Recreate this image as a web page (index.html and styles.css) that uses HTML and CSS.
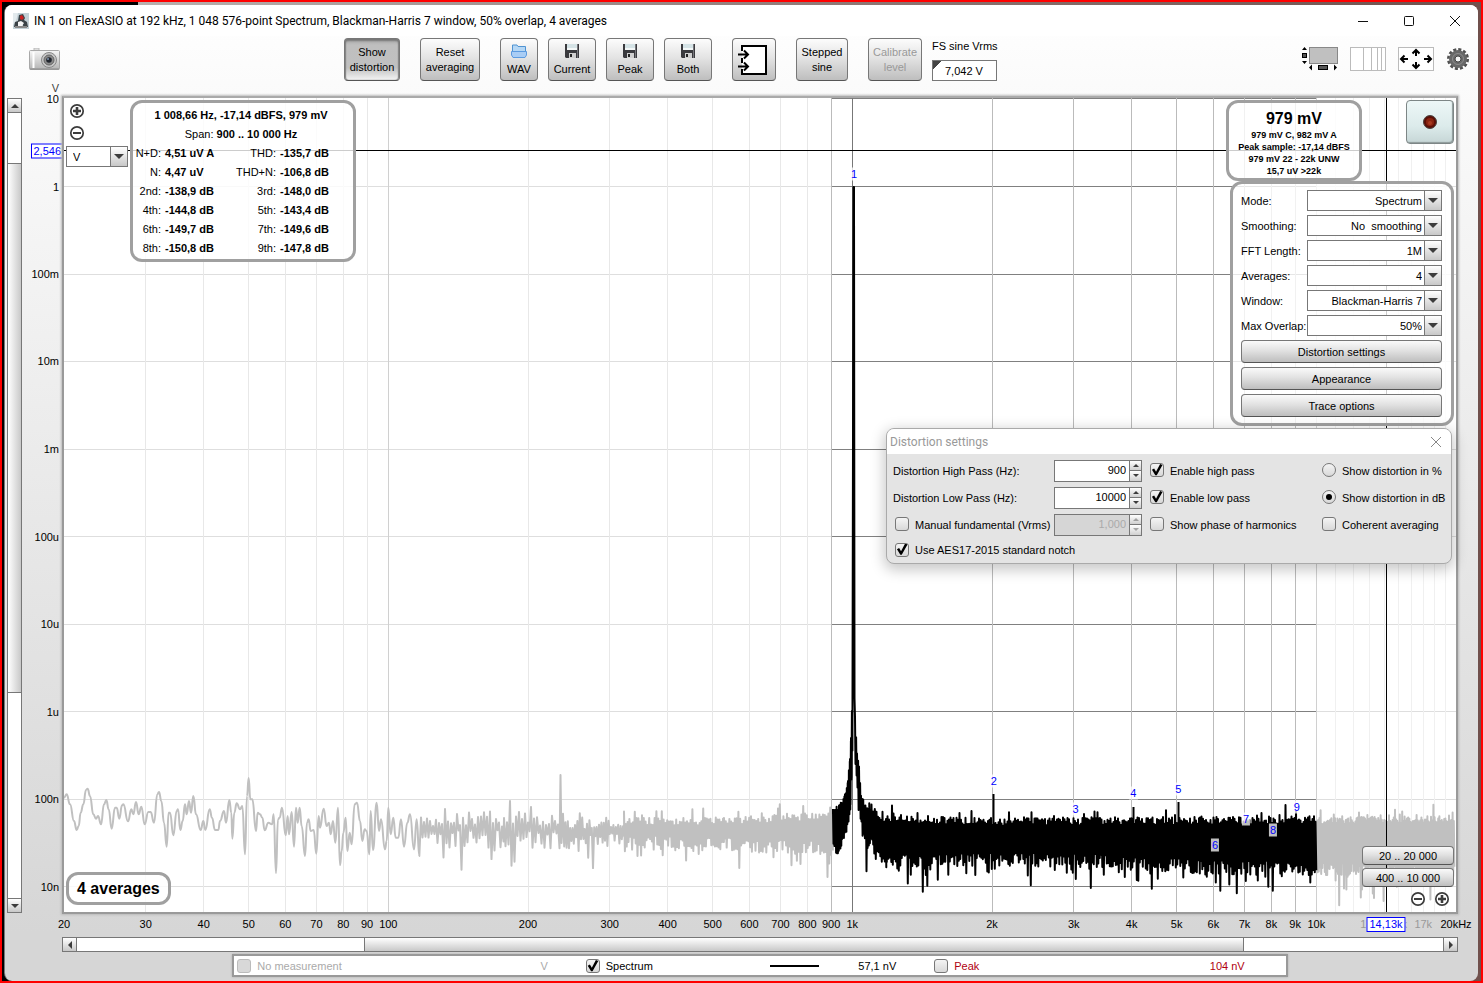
FILE: index.html
```html
<!DOCTYPE html>
<html lang="en">
<head>
    <meta charset="UTF-8">
    <meta name="viewport" content="width=device-width, initial-scale=1.0">
    <title>Spectrum analyser</title>
    <link rel="stylesheet" href="styles.css">
</head>
<body>
    <!-- Shared icons -->
    <svg class="icon-defs" width="0" height="0" aria-hidden="true">
        <linearGradient id="metal" x1="0" y1="0" x2="0" y2="1">
            <stop offset="0" stop-color="#f6f6f6"/>
            <stop offset="1" stop-color="#b4b4b4"/>
        </linearGradient>
        <symbol id="floppy" viewBox="0 0 14 14">
            <path d="M0 0H14V14H1L0 13Z" fill="#3a3a3e"/>
            <rect x="2" width="10" height="6" fill="#d5e3e6"/>
            <rect x="2" y="4" width="10" height="2" fill="#f4f8f8"/>
            <rect x="4" y="9" width="7" height="5" fill="#d0d0d0"/>
            <rect x="5" y="10" width="2" height="3" fill="#222"/>
            <path d="M12.500 0V14" stroke="#77777c"/>
        </symbol>
        <symbol id="plus" viewBox="0 0 16 16">
            <circle cx="8" cy="8" r="6.200" fill="#fff" stroke="#3c3c3c" stroke-width="1.700"/>
            <path d="M4 8H12M8 4V12" stroke="#3c3c3c" stroke-width="2.600"/>
        </symbol>
        <symbol id="minus" viewBox="0 0 16 16">
            <circle cx="8" cy="8" r="6.200" fill="#fff" stroke="#3c3c3c" stroke-width="1.700"/>
            <path d="M4 8H12" stroke="#3c3c3c" stroke-width="2.200"/>
        </symbol>
    </svg>

    <div class="desktop">
    <div class="window">
        <header class="titlebar">
            <svg width="16" height="16" viewBox="0 0 16 16">
                <rect width="16" height="16" fill="#c3d0d6"/>
                <path d="M0 0H5L3 8L0 12Z" fill="#e3eaed"/>
                <path d="M6 2L10 1L12 5L11 7L14 9L15 14H11L9 11L5 14H1L2 9L5 8Z" fill="#3b4246"/>
                <path d="M7 3L9 2L11 5L9 7L7 6Z" fill="#c22"/>
                <path d="M5 9L8 8L11 10L9 13H5Z" fill="#f5f5f5"/>
                <path d="M2 13H14V15H2Z" fill="#888"/>
            </svg>
            <h1>IN 1 on FlexASIO at 192 kHz, 1 048 576-point Spectrum, Blackman-Harris 7 window, 50% overlap, 4 averages</h1>
            <div class="window-controls">
                <button aria-label="Minimise"><svg width="12" height="12" viewBox="0 0 12 12"><path d="M1 6.500H11"/></svg></button>
                <button aria-label="Maximise"><svg width="12" height="12" viewBox="0 0 12 12"><rect x="1.500" y="1.500" width="9" height="9" rx="1"/></svg></button>
                <button aria-label="Close"><svg width="12" height="12" viewBox="0 0 12 12"><path d="M1 1L11 11M11 1L1 11"/></svg></button>
            </div>
        </header>

        <div class="toolbar">
            <button class="bare" aria-label="Capture image">
                <svg width="31" height="22" viewBox="0 0 31 22">
                    <rect x="5" y="0" width="5" height="3" fill="#ddd" stroke="#bbb"/>
                    <rect x=".5" y="2.500" width="30" height="19" rx="1" fill="url(#metal)" stroke="#a8a8a8"/>
                    <path d="M4.500 4V20" stroke="#fff" stroke-width="2"/>
                    <path d="M1 21H30" stroke="#888"/>
                    <circle cx="20" cy="12" r="7.500" fill="#c8c8c8" stroke="#888"/>
                    <circle cx="20" cy="12" r="5" fill="#8b8b8b" stroke="#666"/>
                    <circle cx="20" cy="12" r="2.800" fill="#22262e"/>
                    <circle cx="19" cy="11" r="1" fill="#7f93ad"/>
                </svg>
            </button>

            <div class="tools">
                <button class="tool pressed w56">Show<br>distortion</button>
                <button class="tool w60">Reset<br>averaging</button>
                <div class="save-group">
                    <button class="tool w38">
                        <svg width="16" height="14" viewBox="0 0 16 14">
                            <path d="M1.500 13V1H6L7 2.500H14.500V8" fill="#b5d7f5" stroke="#4f93d2"/>
                            <path d="M.5 7.500H15.500V11L14 13.500H2L.5 11Z" fill="#a9cdf5" stroke="#5c9be0"/>
                        </svg>
                        <span>WAV</span>
                    </button>
                    <button class="tool w48"><svg width="14" height="14"><use href="#floppy"/></svg><span>Current</span></button>
                    <button class="tool w48"><svg width="14" height="14"><use href="#floppy"/></svg><span>Peak</span></button>
                    <button class="tool w48"><svg width="14" height="14"><use href="#floppy"/></svg><span>Both</span></button>
                </div>
                <button class="tool w44" aria-label="Inputs">
                    <svg width="30" height="30" viewBox="0 0 30 30" fill="none" stroke="#000" stroke-width="2">
                        <path d="M4 1H28V29H4Z" fill="#fff" stroke="none"/>
                        <path d="M4 6V1H28V29H4V24M4 13V18"/>
                        <path d="M0 9.500H10M6 5.500L10 9.500L6 13.500M0 21.500H10M6 17.500L10 21.500L6 25.500"/>
                    </svg>
                </button>
                <button class="tool w52">Stepped<br>sine</button>
                <div class="save-group">
                    <button class="tool w54" disabled>Calibrate<br>level</button>
                    <div class="fs-field">
                        <label for="fs">FS sine Vrms</label>
                        <input id="fs" type="text" value="7,042 V">
                    </div>
                </div>
            </div>

            <div class="view-icons">
                <button class="bare" aria-label="Scrollbars">
                    <svg width="37" height="26" viewBox="0 0 37 26">
                        <rect x="8.500" y="1.500" width="28" height="16" fill="#c0c0c0" stroke="#888"/>
                        <path d="M1 4L3.500 1L6 4ZM1 15L3.500 18L6 15ZM11 18.500L8 21.500L11 24.500ZM33 18.500L36 21.500L33 24.500Z"/>
                        <rect x="1.500" y="7.500" width="4" height="4" fill="#555" stroke="#000"/>
                        <rect x="17.500" y="19.500" width="9" height="4" fill="#555" stroke="#000"/>
                    </svg>
                </button>
                <button class="bare" aria-label="Log grid">
                    <svg width="36" height="24" viewBox="0 0 36 24">
                        <rect x=".5" y=".5" width="35" height="23" fill="#fff" stroke="#bbb"/>
                        <path d="M13.500 1V23M21.500 1V23M27.500 1V23M31.500 1V23" stroke="#bbb"/>
                    </svg>
                </button>
                <button class="bare" aria-label="Limits">
                    <svg width="36" height="24" viewBox="0 0 36 24" fill="none" stroke="#000" stroke-width="2">
                        <rect x=".5" y=".5" width="35" height="23" fill="#fff" stroke="#bbb" stroke-width="1"/>
                        <path d="M18 9V3M14.500 6.500L18 3L21.500 6.500M18 15V21M14.500 17.500L18 21L21.500 17.500M10 12H3M6.500 8.500L3 12L6.500 15.500M26 12H33M29.500 8.500L33 12L29.500 15.500"/>
                    </svg>
                </button>
                <button class="bare" aria-label="Settings">
                    <svg width="24" height="24" viewBox="0 0 24 24">
                        <circle cx="12" cy="12" r="9.500" fill="none" stroke="#505050" stroke-width="3" stroke-dasharray="3 1.970"/>
                        <circle cx="12" cy="12" r="6" fill="none" stroke="#686868" stroke-width="6"/>
                        <circle cx="12" cy="12" r="5.500" fill="none" stroke="#8e8e8e"/>
                        <circle cx="12" cy="12" r="3" fill="#f4f4f4" stroke="#444"/>
                    </svg>
                </button>
            </div>
        </div>

        <main class="workspace">
            <div class="scroll vertical">
                <button aria-label="Scroll up"><i class="tri up"></i></button>
                <div class="track before"></div>
                <div class="thumb"></div>
                <div class="track after"></div>
                <button aria-label="Scroll down"><i class="tri down"></i></button>
            </div>

            <div class="y-axis" id="yAxis">
                <span class="unit">V</span>
            </div>

            <section class="plot" id="plot">
                <svg class="graph" viewBox="0 0 1392 814" preserveAspectRatio="none">
                    <g id="grid"></g>
                    <path id="noiseLow" class="trace muted"/>
                    <path id="noiseHigh" class="trace muted"/>
                    <path id="signal" class="trace"/>
                    <g id="cursor"></g>
                </svg>

                <div class="plot-left">
                    <button class="bare" aria-label="Zoom in vertically"><svg width="16" height="16"><use href="#plus"/></svg></button>
                    <button class="bare" aria-label="Zoom out vertically"><svg width="16" height="16"><use href="#minus"/></svg></button>
                    <span class="combo unit-combo"><select aria-label="Unit"><option>V</option></select></span>
                </div>

                <div class="panel readout">
                    <strong>1 008,66 Hz, -17,14 dBFS, 979 mV</strong>
                    <p>Span: <strong>900 .. 10 000 Hz</strong></p>
                    <dl>
                        <dt>N+D:</dt><dd>4,51 uV A</dd><dt>THD:</dt><dd>-135,7 dB</dd>
                        <dt>N:</dt><dd>4,47 uV</dd><dt>THD+N:</dt><dd>-106,8 dB</dd>
                        <dt>2nd:</dt><dd>-138,9 dB</dd><dt>3rd:</dt><dd>-148,0 dB</dd>
                        <dt>4th:</dt><dd>-144,8 dB</dd><dt>5th:</dt><dd>-143,4 dB</dd>
                        <dt>6th:</dt><dd>-149,7 dB</dd><dt>7th:</dt><dd>-149,6 dB</dd>
                        <dt>8th:</dt><dd>-150,8 dB</dd><dt>9th:</dt><dd>-147,8 dB</dd>
                    </dl>
                </div>

                <div class="panel level">
                    <strong>979 mV</strong>
                    <p>979 mV C, 982 mV A</p>
                    <p>Peak sample: -17,14 dBFS</p>
                    <p>979 mV 22 - 22k UNW</p>
                    <p>15,7 uV &gt;22k</p>
                </div>

                <button class="record" aria-label="Record">
                    <svg width="16" height="16" viewBox="0 0 16 16">
                        <circle cx="8" cy="8" r="6.500" fill="#5c0f06" stroke="#4a4440"/>
                        <circle cx="8" cy="8" r="4" fill="#8a2410"/>
                        <circle cx="8" cy="9" r="2" fill="#a83a20"/>
                    </svg>
                </button>

                <form class="panel controls">
                    <label for="mode">Mode:</label>
                    <span class="combo"><select id="mode"><option>Spectrum</option></select></span>
                    <label for="smooth">Smoothing:</label>
                    <span class="combo"><select id="smooth"><option>No&nbsp; smoothing</option></select></span>
                    <label for="fft">FFT Length:</label>
                    <span class="combo"><select id="fft"><option>1M</option></select></span>
                    <label for="avg">Averages:</label>
                    <span class="combo"><select id="avg"><option>4</option></select></span>
                    <label for="win">Window:</label>
                    <span class="combo"><select id="win"><option>Blackman-Harris 7</option></select></span>
                    <label for="overlap">Max Overlap:</label>
                    <span class="combo"><select id="overlap"><option>50%</option></select></span>
                    <button type="button" class="wide">Distortion settings</button>
                    <button type="button" class="wide">Appearance</button>
                    <button type="button" class="wide">Trace options</button>
                </form>

                <div class="panel averages">4 averages</div>

                <div class="ranges">
                    <button class="wide">20 .. 20 000</button>
                    <button class="wide">400 .. 10 000</button>
                    <div class="zoom-x">
                        <button class="bare" aria-label="Zoom out"><svg width="16" height="16"><use href="#minus"/></svg></button>
                        <button class="bare" aria-label="Zoom in"><svg width="16" height="16"><use href="#plus"/></svg></button>
                    </div>
                </div>

                <!-- Distortion settings dialog -->
                <div class="dialog" role="dialog" aria-labelledby="dialogTitle">
                    <div class="dialog-title">
                        <h2 id="dialogTitle">Distortion settings</h2>
                        <button class="bare" aria-label="Close dialog"><svg width="12" height="12" viewBox="0 0 12 12"><path d="M1 1L11 11M11 1L1 11" stroke="#888"/></svg></button>
                    </div>
                    <form class="dialog-body">
                        <label for="hp">Distortion High Pass (Hz):</label>
                        <span class="spinner"><input id="hp" type="text" value="900"><span><button type="button" aria-label="Up"><i class="tri up"></i></button><button type="button" aria-label="Down"><i class="tri down"></i></button></span></span>
                        <label class="check"><input type="checkbox" checked>Enable high pass</label>
                        <label class="check"><input type="radio" name="unit">Show distortion in %</label>

                        <label for="lp">Distortion Low Pass (Hz):</label>
                        <span class="spinner"><input id="lp" type="text" value="10000"><span><button type="button" aria-label="Up"><i class="tri up"></i></button><button type="button" aria-label="Down"><i class="tri down"></i></button></span></span>
                        <label class="check"><input type="checkbox" checked>Enable low pass</label>
                        <label class="check"><input type="radio" name="unit" checked>Show distortion in dB</label>

                        <label class="check"><input type="checkbox">Manual fundamental (Vrms)</label>
                        <span class="spinner off"><input type="text" value="1,000" aria-label="Manual fundamental" disabled><span><button type="button" aria-label="Up" disabled><i class="tri up"></i></button><button type="button" aria-label="Down" disabled><i class="tri down"></i></button></span></span>
                        <label class="check"><input type="checkbox">Show phase of harmonics</label>
                        <label class="check"><input type="checkbox">Coherent averaging</label>

                        <label class="check last"><input type="checkbox" checked>Use AES17-2015 standard notch</label>
                    </form>
                </div>
            </section>

            <div class="x-axis" id="xAxis"></div>

            <div class="scroll horizontal">
                <button aria-label="Scroll left"><i class="tri left"></i></button>
                <div class="track before"></div>
                <div class="thumb"></div>
                <div class="track after"></div>
                <button aria-label="Scroll right"><i class="tri right"></i></button>
            </div>

            <div class="legend">
                <div class="legend-item off">
                    <label class="check"><input type="checkbox" disabled>No measurement</label>
                    <span>V</span>
                </div>
                <div class="legend-item">
                    <label class="check"><input type="checkbox" checked>Spectrum</label>
                    <hr>
                    <span>57,1 nV</span>
                </div>
                <div class="legend-item peak">
                    <label class="check"><input type="checkbox">Peak</label>
                    <span>104 nV</span>
                </div>
            </div>
        </main>
    </div>
    </div>

    <script src="graph.js"></script>
</body>
</html>
```
FILE: graph.js
```js
const W = 1392, H = 814;
const DECADE_X = 464;
const DECADE_Y = 87.5;

const fx = f => DECADE_X * Math.log10(f / 20);
const vy = e => 1 + (1 - e) * DECADE_Y; // e = power of ten, in volts

// Repeatable noise
let seed = 4711;
function rnd() {
    seed = (seed * 16807) % 2147483647;
    return seed / 2147483647;
}

// ---- Grid ----
function line(x1, y1, x2, y2, cls) {
    return `<path class="${cls}" d="M${x1} ${y1}L${x2} ${y2}"/>`;
}

function vline(f) {
    const x = Math.floor(fx(f)) + 0.5;
    let cls = 'v-light';
    if (f === 1000) cls = 'v-major';
    else if (f >= 900 && f < 10000) cls = 'v-span';
    else if (f === 100 || f === 10000) cls = 'v-decade';
    else if (f > 10000) cls = 'v-faint';
    return line(x, 0, x, H, cls);
}

let grid = '';
const spanL = fx(900), spanR = fx(10000);
for (let e = 0; e >= -8; e--) {
    const y = Math.floor(vy(e)) + 0.5;
    grid += line(0, y, W, y, 'h-light') + line(spanL, y, spanR, y, 'h-dark');
}
grid += line(spanL, 0.5, spanR, 0.5, 'h-dark');
for (const base of [10, 100, 1000, 10000]) {
    for (let n = 1; n < 10; n++) {
        const f = n * base;
        if (f > 20 && f < 20000) grid += vline(f);
    }
}
for (let f = 11000; f < 20000; f += 1000) grid += vline(f);
document.getElementById('grid').innerHTML = grid;

// ---- Traces ----
// Single bins at the low end, in thirds of a graph unit
const bins = `0,350 8,340 18,370 30,420 38,447 44,435 50,395 58,370 66,327 71,323 78,345 88,400 96,413 102,405
111,430 120,370 127,357 134,385 143,443 153,380 158,380 166,413 174,373 178,370 192,421 202,385 208,400 216,363
224,400 232,377 242,430 253,393 260,393 270,425 280,340 285,333 292,360 300,425 308,497 314,395 318,395 328,463
338,390 342,385 349,447 356,420 363,370 368,400 375,360 381,395 388,345 396,400 410,447 418,420 424,447 437,385
444,410 453,447 463,447 468,420 480,390 486,425 496,357 502,395 505,473 511,395 518,367 528,385 535,375 543,520
549,345 554,291 559,355 565,355 576,450 581,395 588,400 595,410 602,448 613,425 624,430 629,400 636,577 642,415
647,410 654,380 665,463 671,405 675,460 683,393 690,497 696,380 701,425 707,380 713,435 723,525 729,425 734,415
740,450 749,447 757,518 764,405 768,440 779,383 788,435 795,425 800,460 807,420 814,485 822,380 828,553 833,510
838,455 845,410 850,510 857,455 863,490 872,370 879,365 888,420 895,480 902,445 908,450 916,520 920,390 927,507
938,365 945,450 951,415 963,505 968,480 973,380 980,460 988,410 995,470 1003,470 1011,415 1020,497 1030,425
1038,400 1050,505 1058,415 1066,525`;
let low = '', px = 0, py = 0;
for (const p of bins.split(/\s+/)) {
    const [a, b] = p.split(',').map(Number);
    const x = a / 3, y = b / 3 + 583;
    const mid = (px + x) / 2;
    low += low ? `C${mid} ${py} ${mid} ${y} ${x} ${y}` : `M${x} ${y}`;
    px = x;
    py = y;
}

// Zigzag between the envelope points [x, top, bottom, spread]
function noise(points, step) {
    let d = '';
    for (let i = 0; i < points.length - 1; i++) {
        const [x0, t0, b0, s0] = points[i];
        const [x1, t1, b1, s1] = points[i + 1];
        for (let x = x0; x < x1; x += step) {
            const k = (x - x0) / (x1 - x0);
            const s = s0 + (s1 - s0) * k;
            let top = t0 + (t1 - t0) * k + rnd() * s * 0.5;
            let bottom = b0 + (b1 - b0) * k - rnd() * s * 0.9;
            if (rnd() > 0.75) top += Math.log(rnd() + 0.03) * s * 0.28;
            if (rnd() > 0.68) bottom -= Math.log(rnd() + 0.03) * s * 0.75;
            d += `L${x.toFixed(1)} ${top.toFixed(1)}L${(x + step / 2).toFixed(1)} ${bottom.toFixed(1)}`;
        }
    }
    return d;
}

low += noise([[357, 719, 750, 20], [440, 718, 752, 22], [496, 718, 752, 20]], 3);
low += 'L496.500 677L497.500 745';
low += noise([[499, 722, 752, 18], [560, 722, 750, 18]], 2.4);
low += noise([[560, 720, 752, 17], [660, 719, 754, 16], [768, 714, 757, 16]], 1.8);
document.getElementById('noiseLow').setAttribute('d', low);

let sig = 'M769 711' + noise([
    [769, 711, 757, 14], [775, 707, 756, 12], [781, 697, 735, 8], [784, 681, 727, 5],
    [786, 660, 709, 4], [787, 640, 680, 2], [788, 610, 650, 1]
], 0.9);
sig += 'L788.500 600L789.500 89L790 89L790.500 600';
sig += noise([
    [791, 619, 665, 1], [793, 655, 692, 4], [795, 667, 712, 6], [797, 694, 730, 9],
    [802, 707, 747, 12], [811, 712, 758, 16]
], 1.1);
sig += noise([
    [811, 712, 762, 14], [822, 718, 770, 15], [936, 720, 768, 16],
    [1036, 719, 770, 16], [1136, 719, 776, 16], [1252, 718, 778, 16]
], 1.5);
// Harmonics standing clear of the floor
sig += 'M929.500 740V696M1069.500 740V709M1114.500 740V704';
document.getElementById('signal').setAttribute('d', sig);

document.getElementById('noiseHigh').setAttribute('d',
    'M1253 722' + noise([[1253, 719, 778, 15], [1391, 718, 782, 15]], 1.2));

// ---- Cursor ----
const cx = Math.round(fx(14130)) + 0.5;
document.getElementById('cursor').innerHTML =
    line(0, 52.5, W, 52.5, 'cursor') + line(cx, 0, cx, H, 'cursor');

// ---- Harmonic markers ----
const plot = document.getElementById('plot');
const markers = [76, 683, 711, 695, 691, 747, 721, 732, 709];
markers.forEach((y, i) => {
    const m = document.createElement('span');
    m.className = 'marker';
    m.textContent = i + 1;
    m.style.left = (fx(1008.66 * (i + 1)) / W * 100) + '%';
    m.style.top = (y / H * 100) + '%';
    plot.insertBefore(m, plot.children[1]);
});

// ---- Axis labels ----
function label(parent, text, prop, pos, cls) {
    const s = document.createElement('span');
    s.textContent = text;
    s.className = cls || '';
    s.style[prop] = (pos * 100) + '%';
    parent.appendChild(s);
}

const yAxis = document.getElementById('yAxis');
['10', '1', '100m', '10m', '1m', '100u', '10u', '1u', '100n', '10n'].forEach((t, i) => {
    label(yAxis, t, 'top', (1 + i * DECADE_Y) / H);
});
label(yAxis, '2,546', 'top', 53 / H, 'cursor-box');

const xAxis = document.getElementById('xAxis');
for (const f of [20, 30, 40, 50, 60, 70, 80, 90, 100, 200, 300, 400, 500, 600, 700, 800, 900]) {
    label(xAxis, f, 'left', fx(f) / W);
}
for (const k of [1, 2, 3, 4, 5, 6, 7, 8, 9, 10]) label(xAxis, k + 'k', 'left', fx(k * 1000) / W);
for (const k of [13, 15, 17]) label(xAxis, k + 'k', 'left', fx(k * 1000) / W, 'minor');
label(xAxis, '20kHz', 'left', 1);
label(xAxis, '14,13k', 'left', fx(14130) / W, 'cursor-box');
```
FILE: styles.css
```css
* {
    box-sizing: border-box;
}
body {
    margin: 0;
    font: 11px/13px "Liberation Sans", Arial, sans-serif;
    color: #000;
}
h1, h2, p, dl, dd {
    margin: 0;
}
button, input, select {
    font: inherit;
    color: inherit;
    margin: 0;
}
button {
    padding: 0;
}
.icon-defs {
    position: absolute;
}
.desktop {
    display: flex;
    min-height: 100vh;
    border: 2px solid #f00;
    padding: 3px 3px 0 2px;
    background: linear-gradient(90deg, #000 136px, #b9b0ae 136px, #8d7471 60%, #70504c);
}
.window {
    flex: 1;
    display: flex;
    flex-direction: column;
    border-left: 1px solid #777;
    border-radius: 8px;
    overflow: hidden;
    background: linear-gradient(#fff, #fbfbfb 8%, #d6d6d6 95%);
}

/* Title bar */
.titlebar {
    display: flex;
    align-items: center;
    height: 31px;
    padding: 0 17px 0 8px;
    background: #fff;
}
.titlebar h1 {
    margin-left: 5px;
    font: 12px/16px Roboto, "Noto Sans", sans-serif;
}
.window-controls {
    display: flex;
    gap: 34px;
    margin-left: auto;
}
.window-controls button {
    width: 12px;
    height: 12px;
    border: 0;
    background: none;
}
.window-controls svg {
    display: block;
    fill: none;
    stroke: #111;
}
.bare {
    display: block;
    border: 0;
    background: none;
}
.bare svg {
    display: block;
}

/* Toolbar */
.toolbar {
    display: flex;
    align-items: flex-start;
    height: 60px;
    padding: 2px 8px 0 24px;
}
.toolbar > .bare {
    margin-top: 10px;
}
.tools {
    display: flex;
    gap: 20px;
    margin: 0 auto;
    padding-right: 20px;
}
.save-group {
    display: flex;
    gap: 10px;
}
.tool {
    height: 43px;
    line-height: 15px;
    border: 1px solid #777;
    border-bottom-color: #555;
    border-radius: 4px;
    background: linear-gradient(#fcfcfc, #e4e4e4 45%, #bebebe);
}
.tool svg {
    display: block;
    margin: 0 auto;
}
.tool.w44 svg {
    margin-left: 5px;
}
.tool span {
    display: block;
    margin-top: 5px;
    line-height: 13px;
}
.tool.pressed {
    background: linear-gradient(#aaa, #bfbfbf 15%, #c0c0c0 70%, #f4f4f4);
    box-shadow: inset 0 2px 2px #777, inset 1px 0 1px #888, inset -1px 0 1px #888;
}
.tool:disabled {
    color: #999;
}
.w38 { width: 38px; }
.w44 { width: 44px; }
.w48 { width: 48px; }
.w52 { width: 52px; }
.w54 { width: 54px; }
.w56 { width: 56px; }
.w60 { width: 60px; }
.fs-field {
    width: 65px;
}
.fs-field label {
    display: block;
    padding-top: 2px;
    white-space: nowrap;
}
.fs-field input {
    width: 100%;
    height: 21px;
    margin-top: 7px;
    padding: 1px 12px 0;
    border: 1px solid #777;
    background: linear-gradient(135deg, #444 6px, #fff 6px);
}
.view-icons {
    display: flex;
    align-items: center;
    gap: 12px;
    margin-top: 8px;
}

/* Workspace */
.workspace {
    flex: 1;
    display: grid;
    grid-template: 1fr 23px 15px 25px / 15px 40px 1fr;
    padding: 0 20px 4px 2px;
}
.y-axis, .x-axis {
    position: relative;
    margin: 2px 0;
}
.x-axis {
    grid-column: 3;
    margin: 0 2px;
}
.y-axis span {
    position: absolute;
    right: 3px;
    transform: translateY(-50%);
}
.y-axis .unit {
    top: -10px;
    color: #444;
}
.x-axis span {
    position: absolute;
    top: 4px;
    transform: translateX(-50%);
}
.x-axis .minor {
    color: #999;
}
.y-axis .cursor-box, .x-axis .cursor-box {
    padding: 0 2px;
    border: 1px solid #00f;
    background: #fff;
    color: #00f;
}
.y-axis .cursor-box {
    right: -1px;
    padding: 0 1px;
}
.x-axis .cursor-box {
    top: 3px;
}
.plot {
    position: relative;
    border: 2px solid #9a9a9a;
    border-top-color: #aaa;
    background: #fff;
    box-shadow: 0 0 2px 1px #bbb;
}
.graph {
    position: absolute;
    inset: 0;
    width: 100%;
    height: 100%;
}
.graph path {
    fill: none;
    stroke-width: 1;
    vector-effect: non-scaling-stroke;
}
.graph .trace {
    stroke: #000;
    stroke-width: 2;
    stroke-linejoin: round;
}
.graph .muted { stroke: #c0c0c0; }
.h-light { stroke: #dedede; }
.h-dark { stroke: #808080; }
.v-light { stroke: #e8e8e8; }
.v-faint { stroke: #f0f0f0; }
.v-span { stroke: #bbb; }
.v-decade { stroke: #d0d0d0; }
.v-major { stroke: #777; }
.cursor { stroke: #000; }
.marker {
    position: absolute;
    padding: 0 1px;
    transform: translate(-50%, -50%);
    background: rgba(255, 255, 255, 0.75);
    color: #00f;
}
.panel {
    position: absolute;
    border: 3px solid #a0a0a0;
    border-radius: 12px;
    background: rgba(255, 255, 255, 0.8);
}
.plot-left {
    position: absolute;
    top: 5px;
    left: 2px;
}
.plot-left .bare {
    margin: 0 0 6px 3px;
}
.plot-left .combo {
    margin-top: -1px;
}
.readout {
    top: 2px;
    left: 66px;
    width: 226px;
    padding: 3px 4px 1px 0;
    text-align: center;
    line-height: 19px;
}
.readout dl {
    display: grid;
    grid-template-columns: 28px 61px 46px 1fr;
    column-gap: 4px;
}
.readout dt {
    text-align: right;
}
.readout dd {
    font-weight: bold;
    text-align: left;
}
.level {
    top: 2px;
    right: 94px;
    width: 136px;
    padding: 6px 0 1px;
    font-size: 9px;
    font-weight: bold;
    line-height: 12px;
    text-align: center;
    white-space: nowrap;
}
.level strong {
    display: block;
    font-size: 16px;
    line-height: 20px;
}
.record {
    position: absolute;
    top: 2px;
    right: 2px;
    width: 48px;
    height: 44px;
    border: 1px solid #7d8686;
    border-radius: 4px;
    background: linear-gradient(#edf7f7, #dcebeb 60%, #c6d6d6);
    box-shadow: inset -1px -1px 1px #8d9999;
}
.record svg {
    display: block;
    margin: 0 auto;
}

/* Combo boxes */
.combo {
    position: relative;
    display: block;
    height: 21px;
}
.combo select {
    width: 100%;
    height: 100%;
    padding: 2px 19px 0 6px;
    border: 1px solid #777;
    border-radius: 0;
    background: #fff;
    appearance: none;
    text-align-last: right;
}
.combo::before {
    content: "";
    position: absolute;
    top: 1px;
    right: 1px;
    width: 16px;
    height: 19px;
    border-left: 1px solid #777;
    background: linear-gradient(#fff, #c8c8c8);
    pointer-events: none;
}
.combo::after {
    content: "";
    position: absolute;
    top: 8px;
    right: 4px;
    border: 5px solid transparent;
    border-top-color: #3c3c3c;
    border-bottom: 0;
    pointer-events: none;
}
.unit-combo {
    width: 62px;
}
.unit-combo select {
    text-align-last: left;
}
.controls {
    top: 83px;
    right: 2px;
    display: grid;
    grid-template-columns: 66px 135px;
    row-gap: 4px;
    width: 224px;
    padding: 6px 9px 6px 8px;
}
.controls label {
    padding-top: 5px;
    white-space: nowrap;
}
.wide {
    height: 23px;
    padding-top: 1px;
    border: 1px solid #777;
    border-bottom-color: #555;
    border-radius: 4px;
    background: linear-gradient(#fafafa, #e2e2e2 45%, #bebebe);
}
.controls .wide {
    grid-column: 1 / 3;
}
.averages {
    left: 2px;
    bottom: 7px;
    padding: 0 8px;
    font-size: 16px;
    font-weight: bold;
    line-height: 27px;
}
.ranges {
    position: absolute;
    right: 2px;
    bottom: 5px;
    display: grid;
    gap: 3px;
    width: 92px;
}
.ranges .wide {
    height: 19px;
}
.zoom-x {
    display: flex;
    justify-content: flex-end;
    gap: 8px;
    padding: 1px 4px 0 0;
}

/* Dialog */
.dialog {
    position: absolute;
    top: 330px;
    right: 4px;
    width: 566px;
    border: 1px solid #aaa;
    border-radius: 8px;
    overflow: hidden;
    background: #e4e4e4;
    box-shadow: 0 4px 14px 2px rgba(0, 0, 0, 0.22);
}
.dialog-title {
    display: flex;
    align-items: center;
    justify-content: space-between;
    height: 25px;
    padding: 0 9px 0 3px;
    background: #fff;
}
.dialog-title h2 {
    font: 12px/16px Roboto, "Noto Sans", sans-serif;
    color: #999;
}
.dialog-body {
    display: grid;
    grid-template-columns: 161px 96px 172px 1fr;
    grid-template-rows: 27px 27px 27px 24px;
    align-items: center;
    padding: 3px 0 1px 6px;
    line-height: 15px;
    white-space: nowrap;
}
.dialog-body label {
    padding-top: 1px;
}
.check {
    display: flex;
    align-items: center;
}
.check input {
    position: relative;
    width: 14px;
    height: 14px;
    margin: 0 6px 0 0;
    border: 1px solid #777;
    border-radius: 3px;
    background: linear-gradient(#f4f4f4, #d8d8d8);
    appearance: none;
}
.dialog-body .check input {
    margin-bottom: 2px;
}
.dialog-body > .check:nth-child(9) input, .check.last input {
    margin-left: 2px;
}
.check input:checked::before {
    content: "";
    position: absolute;
    inset: 0;
    background: #000;
    clip-path: polygon(8% 48%, 26% 38%, 42% 64%, 76% 0, 96% 8%, 48% 94%, 36% 94%);
}
.check input[type="radio"] {
    border-radius: 50%;
}
.check input[type="radio"]:checked::before {
    inset: 3px;
    border-radius: 50%;
    clip-path: none;
}
.check input:disabled {
    border-color: #bbb;
    background: #d8d8d8;
}
.last {
    grid-column: 1 / 5;
}
.spinner {
    display: flex;
    width: 88px;
    height: 22px;
    border: 1px solid #777;
    background: #fff;
}
.spinner input {
    flex: 1;
    min-width: 0;
    padding: 0 3px 0 0;
    border: 0;
    background: none;
    text-align: right;
}
.spinner > span {
    display: grid;
    width: 12px;
    border-left: 1px solid #777;
    background: #777;
    gap: 1px;
}
.spinner button {
    display: grid;
    place-items: center;
    border: 0;
    background: linear-gradient(#fff, #d0d0d0);
}
.spinner .tri {
    border-width: 3px;
}
.spinner .up { border-top-width: 0; }
.spinner .down { border-bottom-width: 0; }
.spinner.off {
    background: #d6d6d6;
    color: #aaa;
}
.spinner.off .tri {
    opacity: 0.4;
}

/* Scrollbars */
.tri {
    display: block;
    border: 4px solid transparent;
}
.tri.up { border-bottom-color: #3c3c3c; border-top: 0; }
.tri.down { border-top-color: #3c3c3c; border-bottom: 0; }
.tri.left { border-right-color: #3c3c3c; border-left: 0; }
.tri.right { border-left-color: #3c3c3c; border-right: 0; }
.scroll {
    display: flex;
    border: 1px solid #777;
    background: #fff;
}
.scroll button {
    display: grid;
    place-items: center;
    flex: 0 0 14px;
    border: 0;
    background: linear-gradient(#fff, #c8c8c8);
}
.vertical {
    flex-direction: column;
    margin: 2px 0 1px;
}
.vertical button:first-child, .vertical .thumb { border-bottom: 1px solid #777; }
.vertical button:last-child, .vertical .thumb { border-top: 1px solid #777; }
.vertical .before { flex: 50; }
.vertical .thumb {
    flex: 529;
    background: linear-gradient(90deg, #fff, #c8c8c8);
}
.vertical .after { flex: 205; }
.horizontal {
    grid-column: 3;
}
.horizontal button:first-child, .horizontal .thumb { border-right: 1px solid #777; }
.horizontal button:last-child, .horizontal .thumb { border-left: 1px solid #777; }
.horizontal .before { flex: 287; }
.horizontal .thumb {
    flex: 879;
    background: linear-gradient(#fff, #c8c8c8);
}
.horizontal .after { flex: 199; }

/* Legend */
.legend {
    grid-column: 3;
    justify-self: center;
    display: grid;
    grid-template-columns: repeat(3, 1fr);
    width: 75.6%;
    margin-top: 2px;
    padding: 0 3px;
    border: 2px solid #999;
    background: #fff;
    box-shadow: 0 0 2px #aaa;
}
.legend-item {
    display: flex;
    align-items: center;
    justify-content: space-between;
    padding: 1px 38px 0 0;
}
.legend-item hr {
    width: 49px;
    margin: 0 39px 0 auto;
    border: 0;
    border-top: 2px solid #000;
}
.legend-item.off {
    color: #aaa;
}
.legend-item.peak {
    color: #b00010;
}
```
